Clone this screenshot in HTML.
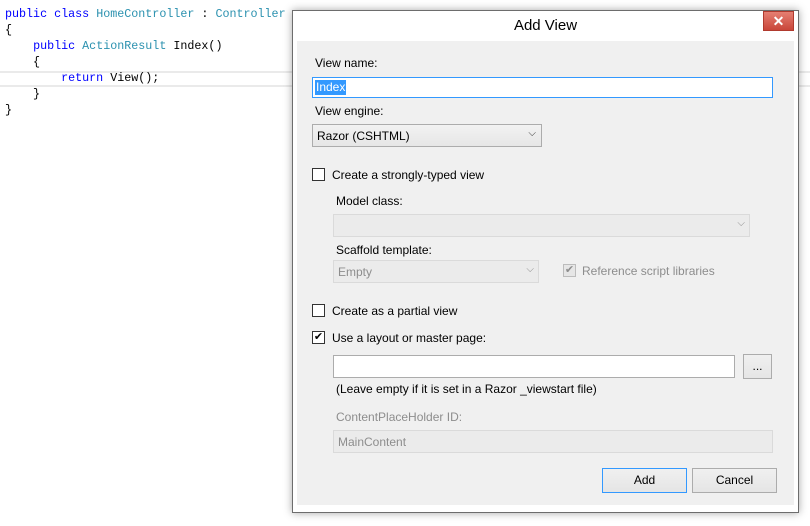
<!DOCTYPE html>
<html><head><style>
*{margin:0;padding:0;box-sizing:border-box}
body{width:810px;height:526px;background:#fff;position:relative;overflow:hidden;font-family:"Liberation Sans",sans-serif;font-size:12px;color:#000}
.code{position:absolute;left:5px;font-family:"Liberation Mono",monospace;font-size:11.7px;white-space:pre;line-height:16px}
.k{color:#00f}.t{color:#2b91af}
.a{position:absolute}
.lbl{position:absolute;font-size:12px}
.dis{color:#8d8d8d}
.box{position:absolute;border:1px solid #acacac;background:#fff}
.cb{position:absolute;width:13px;height:13px;border:1px solid #333;background:#fff}
.btn{position:absolute;border:1px solid #acacac;background:linear-gradient(#f0f0f0,#e5e5e5);text-align:center;font-size:12px}
</style></head><body>
<div class="a" style="left:0;top:71px;width:810px;height:16px;border-top:2px solid #eaeaea;border-bottom:2px solid #eaeaea"></div>
<div class="code" style="top:6px"><span class="k">public</span> <span class="k">class</span> <span class="t">HomeController</span> : <span class="t">Controller</span>
{
    <span class="k">public</span> <span class="t">ActionResult</span> Index()
    {
        <span class="k">return</span> View();
    }
}</div>

<div class="a" style="left:292px;top:10px;width:507px;height:503px;background:#fff;border:1px solid #6d6d6d;box-shadow:0 0 8px rgba(0,0,0,.35)">
  <div class="a" style="left:0;top:0;width:505px;height:30px;text-align:center;line-height:30px;font-size:15px">Add View</div>
  <div class="a" style="left:470px;top:0;width:31px;height:20px;background:linear-gradient(#e57f72,#c9463a);border:1px solid #b03a2e;color:#fff;text-align:center;font-weight:bold;font-size:14px;line-height:18px">✕</div>
  <div class="a" style="left:4px;top:30px;width:497px;height:464px;background:#f0f0f0"></div>
</div>

<div class="lbl" style="left:315px;top:56px">View name:</div>
<div class="box" style="left:312px;top:77px;width:461px;height:21px;border-color:#3399ff"><span style="position:absolute;left:2px;top:2px;background:#3399ff;color:#fff;line-height:15px;padding:0 1px">Index</span></div>
<div class="lbl" style="left:315px;top:104px">View engine:</div>
<div class="box" style="left:312px;top:124px;width:230px;height:23px;background:linear-gradient(#f2f2f2,#e6e6e6)"><span style="position:absolute;left:4px;top:4px">Razor (CSHTML)</span><span style="position:absolute;right:5px;top:3px;font-size:10px;color:#333">⌵</span></div>

<div class="cb" style="left:312px;top:168px"></div>
<div class="lbl" style="left:332px;top:168px">Create a strongly-typed view</div>
<div class="lbl" style="left:336px;top:194px">Model class:</div>
<div class="box" style="left:333px;top:214px;width:417px;height:23px;border-color:#dadada;background:#ebebeb"><span class="dis" style="position:absolute;right:4px;top:3px;font-size:10px">⌵</span></div>
<div class="lbl" style="left:336px;top:243px">Scaffold template:</div>
<div class="box" style="left:333px;top:260px;width:206px;height:23px;border-color:#dadada;background:#ebebeb"><span class="dis" style="position:absolute;left:4px;top:4px">Empty</span><span class="dis" style="position:absolute;right:4px;top:3px;font-size:10px">⌵</span></div>
<div class="cb" style="left:563px;top:264px;border-color:#bcbcbc;background:#e6e6e6;color:#8d8d8d;font-size:11px;line-height:11px;text-align:center">✔</div>
<div class="lbl dis" style="left:582px;top:264px">Reference script libraries</div>

<div class="cb" style="left:312px;top:304px"></div>
<div class="lbl" style="left:332px;top:304px">Create as a partial view</div>
<div class="cb" style="left:312px;top:331px;font-size:11px;line-height:11px;text-align:center">✔</div>
<div class="lbl" style="left:332px;top:331px">Use a layout or master page:</div>
<div class="box" style="left:333px;top:355px;width:402px;height:23px"></div>
<div class="btn" style="left:743px;top:354px;width:29px;height:25px;line-height:22px">...</div>
<div class="lbl" style="left:336px;top:382px">(Leave empty if it is set in a Razor _viewstart file)</div>
<div class="lbl dis" style="left:336px;top:410px">ContentPlaceHolder ID:</div>
<div class="box" style="left:333px;top:430px;width:440px;height:23px;border-color:#dadada;background:#ebebeb"><span class="dis" style="position:absolute;left:4px;top:4px">MainContent</span></div>

<div class="btn" style="left:602px;top:468px;width:85px;height:25px;line-height:23px;border-color:#3399ff">Add</div>
<div class="btn" style="left:692px;top:468px;width:85px;height:25px;line-height:23px">Cancel</div>
</body></html>
